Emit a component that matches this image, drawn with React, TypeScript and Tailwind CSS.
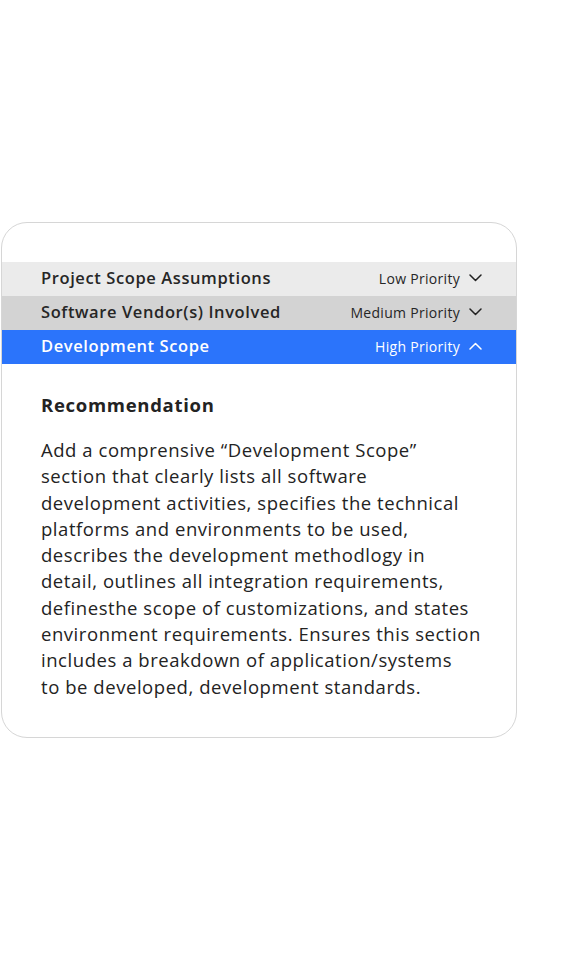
import React from "react";

const Chevron = ({ up = false, color = "#222" }: { up?: boolean; color?: string }) => (
  <svg width="13" height="8" viewBox="0 0 13 8" fill="none" className="shrink-0">
    <path
      d={up ? "M1 7L6.5 1.5L12 7" : "M1 1L6.5 6.5L12 1"}
      stroke={color}
      strokeWidth="1.5"
      strokeLinecap="round"
      strokeLinejoin="round"
    />
  </svg>
);

const rows = [
  { title: "Project Scope Assumptions", priority: "Low Priority", bg: "bg-[#ebebeb]", text: "text-[#262626]", up: false },
  { title: "Software Vendor(s) Involved", priority: "Medium Priority", bg: "bg-[#d3d3d3]", text: "text-[#262626]", up: false },
  { title: "Development Scope", priority: "High Priority", bg: "bg-[#2b74fb]", text: "text-white", up: true },
];

const lines = [
  "Add a comprensive “Development Scope”",
  "section that clearly lists all software",
  "development activities, specifies the technical",
  "platforms and environments to be used,",
  "describes the development methodlogy in",
  "detail, outlines all integration requirements,",
  "definesthe scope of customizations, and states",
  "environment requirements. Ensures this section",
  "includes a breakdown of application/systems",
  "to be developed, development standards.",
];

export default function App() {
  return (
    <div className="w-[577px] h-[960px] bg-white" style={{ fontFamily: "'Open Sans', 'Liberation Sans', sans-serif" }}>
      <div className="pt-[222px] pl-[1px]">
        <div className="w-[516px] h-[516px] rounded-[26px] border-[1.5px] border-[#d6d6d6] bg-white overflow-hidden pt-[39px]">
          {rows.map((r) => (
            <div key={r.title} className={`h-[34px] flex items-center justify-between pl-[39px] pr-[34px] pb-[2px] ${r.bg} ${r.text}`}>
              <span className="text-[16.5px] font-semibold tracking-[0.6px]">{r.title}</span>
              <span className="flex items-center gap-[9px]">
                <span className="text-[14px] font-normal tracking-[0.3px]">{r.priority}</span>
                <Chevron up={r.up} color={r.up ? "#fff" : "#222"} />
              </span>
            </div>
          ))}
          <div className="pl-[39px] pt-[28px] text-[#232323]">
            <div className="text-[18.5px] font-bold leading-[26px] tracking-[0.7px]">Recommendation</div>
            <div className="mt-[19px] text-[18.5px] leading-[26.3px] font-normal tracking-[0.55px]">
              {lines.map((l) => (
                <div key={l} className="whitespace-nowrap">{l}</div>
              ))}
            </div>
          </div>
        </div>
      </div>
    </div>
  );
}
